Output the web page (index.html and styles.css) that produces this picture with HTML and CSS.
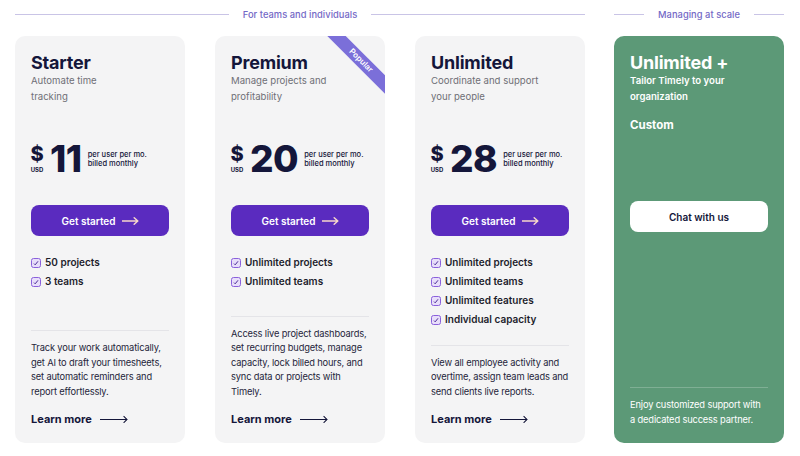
FILE: index.html
```html
<!DOCTYPE html>
<html lang="en">
<head>
<meta charset="utf-8">
<title>Pricing</title>
<link rel="stylesheet" href="styles.css">
</head>
<body>
<div class="page">
  <section class="group">
    <div class="group-head"><span class="line"></span><span class="head-text">For teams and individuals</span><span class="line"></span></div>
    <div class="cards">
      <article class="card">
        <h2 class="title">Starter</h2>
        <p class="subtitle">Automate time<br>tracking</p>
        <div class="price">
          <div class="cur"><span class="dollar">$</span><span class="usd">USD</span></div>
          <span class="amount">11</span>
          <span class="per">per user per mo.<br>billed monthly</span>
        </div>
        <a class="btn">Get started <svg width="17" height="8" viewBox="0 0 17 8"><path d="M0 4H15.5M12.2 0.8L15.8 4L12.2 7.2" stroke="#f6d6ca" stroke-width="1.5" fill="none" stroke-linecap="round" stroke-linejoin="round"/></svg></a>
        <ul class="features">
          <li><svg class="chk" width="10" height="10" viewBox="0 0 10 10"><rect x="0.5" y="0.5" width="9" height="9" rx="2" fill="#e8defa" stroke="#8a60dc"/><path d="M3 5.6L4.2 6.8L7 3.3" stroke="#4a2a98" stroke-width="1" fill="none"/></svg>50 projects</li>
          <li><svg class="chk" width="10" height="10" viewBox="0 0 10 10"><rect x="0.5" y="0.5" width="9" height="9" rx="2" fill="#e8defa" stroke="#8a60dc"/><path d="M3 5.6L4.2 6.8L7 3.3" stroke="#4a2a98" stroke-width="1" fill="none"/></svg>3 teams</li>
        </ul>
        <div class="bottom">
          <p class="desc">Track your work automatically, get AI to draft your timesheets, set automatic reminders and report effortlessly.</p>
          <a class="learn">Learn more <svg width="28" height="8" viewBox="0 0 28 8"><path d="M0 4.5H27M23.6 1.2L27 4.5L23.6 7.8" stroke="#14163a" stroke-width="1.1" fill="none"/></svg></a>
        </div>
      </article>
      <article class="card">
        <div class="ribbon">Popular</div>
        <h2 class="title">Premium</h2>
        <p class="subtitle">Manage projects and<br>profitability</p>
        <div class="price">
          <div class="cur"><span class="dollar">$</span><span class="usd">USD</span></div>
          <span class="amount">20</span>
          <span class="per">per user per mo.<br>billed monthly</span>
        </div>
        <a class="btn">Get started <svg width="17" height="8" viewBox="0 0 17 8"><path d="M0 4H15.5M12.2 0.8L15.8 4L12.2 7.2" stroke="#f6d6ca" stroke-width="1.5" fill="none" stroke-linecap="round" stroke-linejoin="round"/></svg></a>
        <ul class="features">
          <li><svg class="chk" width="10" height="10" viewBox="0 0 10 10"><rect x="0.5" y="0.5" width="9" height="9" rx="2" fill="#e8defa" stroke="#8a60dc"/><path d="M3 5.6L4.2 6.8L7 3.3" stroke="#4a2a98" stroke-width="1" fill="none"/></svg>Unlimited projects</li>
          <li><svg class="chk" width="10" height="10" viewBox="0 0 10 10"><rect x="0.5" y="0.5" width="9" height="9" rx="2" fill="#e8defa" stroke="#8a60dc"/><path d="M3 5.6L4.2 6.8L7 3.3" stroke="#4a2a98" stroke-width="1" fill="none"/></svg>Unlimited teams</li>
        </ul>
        <div class="bottom">
          <p class="desc">Access live project dashboards, set recurring budgets, manage capacity, lock billed hours, and sync data or projects with Timely.</p>
          <a class="learn">Learn more <svg width="28" height="8" viewBox="0 0 28 8"><path d="M0 4.5H27M23.6 1.2L27 4.5L23.6 7.8" stroke="#14163a" stroke-width="1.1" fill="none"/></svg></a>
        </div>
      </article>
      <article class="card">
        <h2 class="title">Unlimited</h2>
        <p class="subtitle">Coordinate and support<br>your people</p>
        <div class="price">
          <div class="cur"><span class="dollar">$</span><span class="usd">USD</span></div>
          <span class="amount">28</span>
          <span class="per">per user per mo.<br>billed monthly</span>
        </div>
        <a class="btn">Get started <svg width="17" height="8" viewBox="0 0 17 8"><path d="M0 4H15.5M12.2 0.8L15.8 4L12.2 7.2" stroke="#f6d6ca" stroke-width="1.5" fill="none" stroke-linecap="round" stroke-linejoin="round"/></svg></a>
        <ul class="features">
          <li><svg class="chk" width="10" height="10" viewBox="0 0 10 10"><rect x="0.5" y="0.5" width="9" height="9" rx="2" fill="#e8defa" stroke="#8a60dc"/><path d="M3 5.6L4.2 6.8L7 3.3" stroke="#4a2a98" stroke-width="1" fill="none"/></svg>Unlimited projects</li>
          <li><svg class="chk" width="10" height="10" viewBox="0 0 10 10"><rect x="0.5" y="0.5" width="9" height="9" rx="2" fill="#e8defa" stroke="#8a60dc"/><path d="M3 5.6L4.2 6.8L7 3.3" stroke="#4a2a98" stroke-width="1" fill="none"/></svg>Unlimited teams</li>
          <li><svg class="chk" width="10" height="10" viewBox="0 0 10 10"><rect x="0.5" y="0.5" width="9" height="9" rx="2" fill="#e8defa" stroke="#8a60dc"/><path d="M3 5.6L4.2 6.8L7 3.3" stroke="#4a2a98" stroke-width="1" fill="none"/></svg>Unlimited features</li>
          <li><svg class="chk" width="10" height="10" viewBox="0 0 10 10"><rect x="0.5" y="0.5" width="9" height="9" rx="2" fill="#e8defa" stroke="#8a60dc"/><path d="M3 5.6L4.2 6.8L7 3.3" stroke="#4a2a98" stroke-width="1" fill="none"/></svg>Individual capacity</li>
        </ul>
        <div class="bottom">
          <p class="desc">View all employee activity and overtime, assign team leads and send clients live reports.</p>
          <a class="learn">Learn more <svg width="28" height="8" viewBox="0 0 28 8"><path d="M0 4.5H27M23.6 1.2L27 4.5L23.6 7.8" stroke="#14163a" stroke-width="1.1" fill="none"/></svg></a>
        </div>
      </article>
    </div>
  </section>
  <section class="group">
    <div class="group-head short"><span class="line"></span><span class="head-text">Managing at scale</span><span class="line"></span></div>
    <div class="cards">
      <article class="card green">
        <h2 class="title">Unlimited +</h2>
        <p class="subtitle">Tailor Timely to your<br>organization</p>
        <p class="custom">Custom</p>
        <a class="btn white">Chat with us</a>
        <div class="bottom">
          <p class="desc">Enjoy customized support with a dedicated success partner.</p>
        </div>
      </article>
    </div>
  </section>
</div>
</body>
</html>
```
FILE: styles.css
```css
* { box-sizing: border-box; }
html, body { margin: 0; padding: 0; background: #fff; }
body {
  font-family: Inter, "Noto Sans", "Liberation Sans", sans-serif;
  color: #14163a;
  width: 800px;
  height: 456px;
  overflow: hidden;
}
.page {
  display: flex;
  gap: 29px;
  padding: 0 16px 0 15px;
}
.group { display: flex; flex-direction: column; }
.group-head {
  height: 28px;
  margin-bottom: 8px;
  display: flex;
  align-items: center;
  gap: 14px;
}
.group-head .line { flex: 1; height: 1px; background: #c9c4e6; }
.head-text { font-size: 9.3px; font-weight: 500; color: #7368c6; white-space: nowrap; letter-spacing: 0.05px; }
.cards { display: flex; gap: 30px; }
.card {
  position: relative;
  overflow: hidden;
  width: 170px;
  height: 407px;
  background: #f4f4f5;
  border-radius: 10px;
  padding: 17px 16px 16px;
  display: flex;
  flex-direction: column;
}
.title {
  margin: 0;
  font-size: 18px;
  line-height: 20px;
  font-weight: 700;
  letter-spacing: -0.2px;
  color: #14163a;
}
.subtitle {
  margin: 0;
  font-size: 9.6px;
  line-height: 16px;
  color: #6f6f75;
}
.price {
  margin-top: 36px;
  height: 36px;
  display: flex;
  align-items: center;
}
.cur { display: flex; flex-direction: column; align-items: center; width: 12px; }
.dollar { font-size: 20px; line-height: 18px; font-weight: 800; }
.usd { font-size: 6px; line-height: 7px; font-weight: 700; margin-top: 3px; }
.amount {
  margin-left: 7px;
  font-size: 37px;
  line-height: 36px;
  font-weight: 800;
  letter-spacing: -0.5px;
}
.per {
  margin-left: 6px;
  font-size: 7.5px;
  line-height: 9px;
  font-weight: 500;
}
.btn {
  margin-top: 28px;
  height: 31px;
  border-radius: 8px;
  background: #5a2bbf;
  color: #fff;
  font-size: 10px;
  font-weight: 600;
  display: flex;
  align-items: center;
  justify-content: center;
  gap: 6px;
}
.features {
  list-style: none;
  margin: 17px 0 0;
  padding: 0;
}
.features li {
  display: flex;
  align-items: center;
  gap: 4px;
  font-size: 10px;
  line-height: 19px;
  font-weight: 600;
  color: #1d1d2c;
}
.chk { flex: none; }
.bottom {
  margin-top: auto;
  border-top: 1px solid #e4e4e8;
  padding-top: 10px;
}
.desc {
  margin: 0;
  font-size: 9.3px;
  line-height: 14.5px;
  letter-spacing: -0.15px;
  color: #25253a;
}
.learn {
  margin-top: 12px;
  display: flex;
  align-items: center;
  gap: 8px;
  font-size: 11px;
  line-height: 16px;
  font-weight: 700;
  color: #14163a;
}
.ribbon {
  position: absolute;
  left: 96px;
  top: 18px;
  width: 100px;
  height: 13px;
  background: #7b6fd9;
  color: #fff;
  font-size: 8px;
  line-height: 13px;
  font-weight: 600;
  text-align: center;
  transform: rotate(45deg);
}
.card.green { background: #5c9977; }
.green .title { color: #fff; }
.green .subtitle { color: #fff; font-weight: 600; }
.custom {
  margin: 12px 0 0;
  font-size: 11.5px;
  line-height: 16px;
  font-weight: 700;
  color: #fff;
}
.btn.white {
  margin-top: 68px;
  background: #fff;
  color: #14163a;
}
.green .bottom { border-top-color: rgba(255,255,255,0.22); }
.green .desc { color: #fff; font-size: 9.3px; }
```
